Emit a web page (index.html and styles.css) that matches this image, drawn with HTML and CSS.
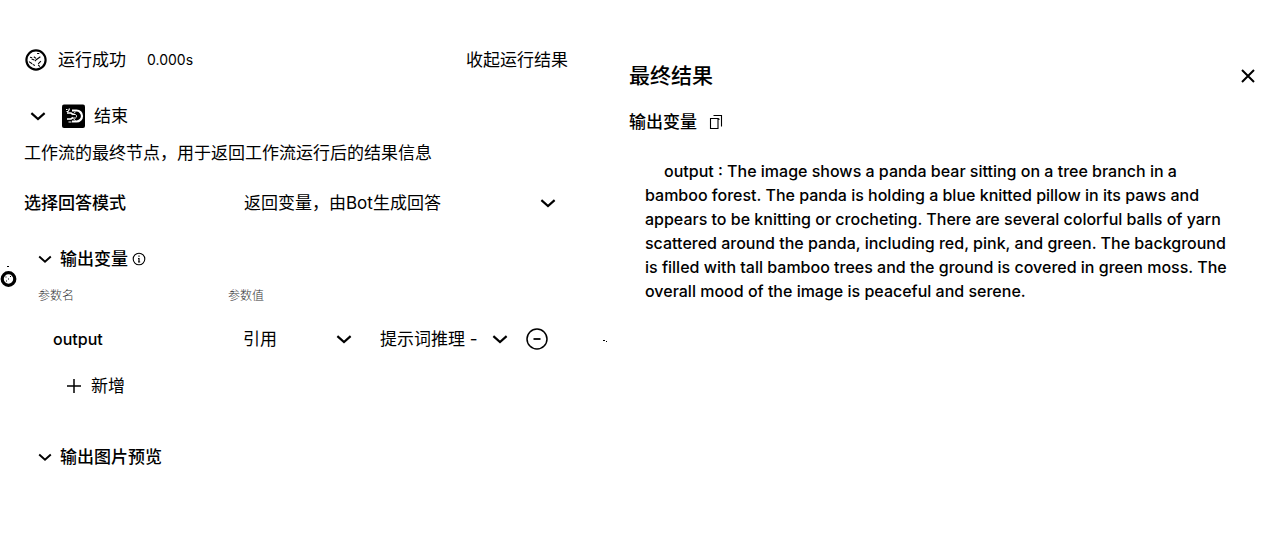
FILE: index.html
```html
<!DOCTYPE html>
<html lang="zh-CN">
<head>
<meta charset="utf-8">
<title>最终结果</title>
<link rel="stylesheet" href="styles.css">
</head>
<body>
<svg class="defs" aria-hidden="true">
  <symbol id="chevron" viewBox="0 0 14 14"><path d="M1.200 4.500 7 9.700l5.800-5.200" fill="none" stroke="currentColor" stroke-width="1.900"/></symbol>
</svg>
<main class="layout">
  <section class="node">
    <header class="status">
      <svg class="status-icon" viewBox="0 0 22 22" aria-hidden="true">
        <circle cx="11" cy="11" r="8.800" fill="#fff" stroke="#000" stroke-width="2"/>
        <path d="M5.500 8.500l2 .5M7 10l2.500 1M10 12l1.500-1.500L15 8M9 8l2 1.500M4.500 12.500l3 2M8 15l2 1M15.500 12 13 14.500M13 15.500l1.500 1.500M12 5h2" fill="none" stroke="#000" stroke-width="1"/>
      </svg>
      <span>运行成功</span>
      <span class="time">0.000s</span>
      <button class="plain collapse" type="button">收起运行结果</button>
    </header>

    <div class="node-head">
      <button class="plain icon-button" type="button" aria-label="折叠节点"><svg class="chevron"><use href="#chevron"/></svg></button>
      <svg class="node-icon" viewBox="0 0 24 24" aria-hidden="true">
        <rect x="0" y="0.500" width="23" height="23.500" rx="2"/>
        <path d="M10 6.500h4.500a5.500 5.500 0 0 1 0 11H10" fill="none" stroke="#fff" stroke-width="2.200"/>
        <path d="M5 9h4l2 1.500M5 15h4l2-1.500" fill="none" stroke="#fff" stroke-width="1.600"/>
        <path d="M11 10.500h2.500a2 2 0 0 1 0 3.500H11M11.500 9.500l2-1.500M11.500 15l2 1.500" fill="none" stroke="#fff" stroke-width="1"/>
        <path d="M4 5.500h1.500M7.500 4.500l-1 2.500M4.500 7.500h2M6.500 18h3" fill="none" stroke="#fff" stroke-width="1.200"/>
      </svg>
      <span>结束</span>
    </div>
    <p class="description">工作流的最终节点，用于返回工作流运行后的结果信息</p>

    <div class="mode">
      <label class="strong" for="mode">选择回答模式</label>
      <span class="select">
        <select id="mode"><option>返回变量，由Bot生成回答</option></select>
        <svg class="chevron" aria-hidden="true"><use href="#chevron"/></svg>
      </span>
    </div>

    <section class="group">
      <h2 class="group-title">
        <button class="plain icon-button" type="button" aria-label="折叠输出变量"><svg class="chevron small"><use href="#chevron"/></svg></button>
        <span>输出变量</span>
        <svg class="info" viewBox="0 0 14 14" aria-hidden="true"><circle cx="7" cy="7" r="5.800" fill="none" stroke="#000" stroke-width="1.100"/><path d="M7 3.500v1.200M6 6.500h1v3.500M6 10h2.200" fill="none" stroke="#000" stroke-width="1.200"/></svg>
      </h2>
      <div class="columns captions">
        <span id="name-caption">参数名</span>
        <span id="value-caption">参数值</span>
      </div>
      <div class="columns fields">
        <input class="name" type="text" value="output" aria-labelledby="name-caption">
        <div class="values">
          <span class="select type">
            <select aria-labelledby="value-caption"><option>引用</option></select>
            <svg class="chevron" aria-hidden="true"><use href="#chevron"/></svg>
          </span>
          <span class="select source">
            <select aria-label="引用来源"><option>提示词推理 -</option></select>
            <svg class="chevron" aria-hidden="true"><use href="#chevron"/></svg>
          </span>
          <button class="plain icon-button" type="button" aria-label="删除">
            <svg class="remove" viewBox="0 0 22 22"><circle cx="11" cy="11" r="10" fill="none" stroke="#000" stroke-width="1.500"/><path d="M7.500 11h7" stroke="#000" stroke-width="1.800"/></svg>
          </button>
        </div>
      </div>
      <button class="plain add" type="button">
        <svg class="plus" viewBox="0 0 14 14" aria-hidden="true"><path d="M7 0v14M0 7h14" stroke="#000" stroke-width="1.500"/></svg>
        新增
      </button>
    </section>

    <h2 class="group-title preview">
      <button class="plain icon-button" type="button" aria-label="折叠输出图片预览"><svg class="chevron small"><use href="#chevron"/></svg></button>
      <span>输出图片预览</span>
    </h2>

    <svg class="port" viewBox="0 0 18 22" aria-hidden="true">
      <path d="M7 1.500h2" stroke="#000"/>
      <circle cx="8.500" cy="14" r="6.300" fill="#fff" stroke="#000" stroke-width="3.200"/>
      <path d="M5.500 12h1M8 14h1M6 16h1M10 11.500h1" stroke="#000"/>
    </svg>
    <svg class="speck" viewBox="0 0 6 4" aria-hidden="true"><path d="M1 1.500h2M4 2.500h1" stroke="#000"/></svg>
  </section>

  <section class="result">
    <header class="result-head">
      <h1>最终结果</h1>
      <button class="plain icon-button" type="button" aria-label="关闭"><svg class="close" viewBox="0 0 14 14"><path d="m1 1 12 12M13 1 1 13" stroke="#000" stroke-width="2"/></svg></button>
    </header>
    <h2 class="result-title">
      <span>输出变量</span>
      <button class="plain icon-button" type="button" aria-label="复制"><svg class="copy" viewBox="0 0 14 16"><path d="M1.500 4.500h7.500v10H1.500zM4.500 1.500h8v11M9 4.500l1.500 1" fill="none" stroke="#000" stroke-width="1.100"/></svg></button>
    </h2>
    <p class="output">output : The image shows a panda bear sitting on a tree branch in a bamboo forest. The panda is holding a blue knitted pillow in its paws and appears to be knitting or crocheting. There are several colorful balls of yarn scattered around the panda, including red, pink, and green. The background is filled with tall bamboo trees and the ground is covered in green moss. The overall mood of the image is peaceful and serene.</p>
  </section>
</main>
</body>
</html>
```
FILE: styles.css
```css
* { box-sizing: border-box; }
body {
  margin: 0;
  background: #fff;
  color: #000;
  font: 17px/24px Inter, "Noto Sans CJK SC", sans-serif;
}
h1, h2, p { margin: 0; font-size: inherit; }
svg { display: block; flex: none; }
.defs { position: absolute; width: 0; height: 0; }
.plain {
  padding: 0;
  border: 0;
  background: none;
  color: inherit;
  font: inherit;
  cursor: pointer;
}
.icon-button { flex: none; }
.chevron { width: 16px; height: 16px; }
.chevron.small { width: 14px; height: 14px; }

.layout { display: grid; grid-template-columns: 19fr 21fr; }
.node { position: relative; padding: 48px 40px 72px 24px; }

.status { display: flex; align-items: center; gap: 10px; }
.status-icon { width: 24px; height: 24px; }
.time { margin-left: 11px; font-size: 14px; }
.collapse { margin-left: auto; }

.node-head { display: flex; align-items: center; gap: 8px; margin-top: 32px; padding-left: 6px; }
.node-icon { width: 24px; height: 24px; margin-left: 8px; }
.description { margin-top: 13px; white-space: nowrap; }

.mode { display: grid; grid-template-columns: 220px 1fr; margin-top: 26px; padding-right: 12px; }
.strong, .group-title, .result-title { font-weight: 500; }

.select { display: grid; grid-template-columns: 1fr 16px; align-items: center; }
.select select {
  grid-area: 1 / 1 / 2 / 3;
  width: 100%;
  height: 24px;
  padding: 0 20px 0 0;
  border: 0;
  appearance: none;
  background: none;
  color: inherit;
  font: inherit;
}
.select .chevron { grid-area: 1 / 2; pointer-events: none; }

.group { margin-top: 32px; padding-left: 14px; }
.group-title { display: flex; align-items: center; gap: 8px; }
.info { width: 14px; height: 14px; margin-left: -4px; }
.columns { display: grid; grid-template-columns: 190px 1fr; }
.captions { margin-top: 16px; color: #333; font-size: 12px; font-weight: 300; line-height: 18px; }
.fields { margin-top: 22px; align-items: center; }
.name {
  width: 100%;
  height: 24px;
  padding: 0 0 0 15px;
  border: 0;
  background: none;
  color: inherit;
  font: 16px/24px Inter, sans-serif;
  font-weight: 500;
}
.values { display: flex; align-items: center; padding-left: 15px; }
.type { width: 109px; }
.source { width: 128px; margin: 0 18px 0 28px; }
.remove { width: 22px; height: 22px; }
.add { display: flex; align-items: center; gap: 10px; margin: 23px 0 0 29px; }
.plus { width: 14px; height: 14px; }
.preview { margin-top: 47px; padding-left: 14px; }
.port { position: absolute; left: 0; top: 265px; width: 18px; height: 22px; }
.speck { position: absolute; right: 0; top: 339px; width: 6px; height: 4px; }

.result { padding: 60px 25px 40px 21px; }
.result-head { display: flex; align-items: center; justify-content: space-between; }
.result-head h1 { font-size: 21px; font-weight: 500; line-height: 32px; }
.close { width: 14px; height: 14px; }
.result-title { display: flex; align-items: center; gap: 12px; margin-top: 18px; }
.copy { width: 14px; height: 16px; }
.output { margin-top: 25px; padding: 0 20px 0 16px; font-size: 16px; font-weight: 500; text-indent: 19px; }
```
